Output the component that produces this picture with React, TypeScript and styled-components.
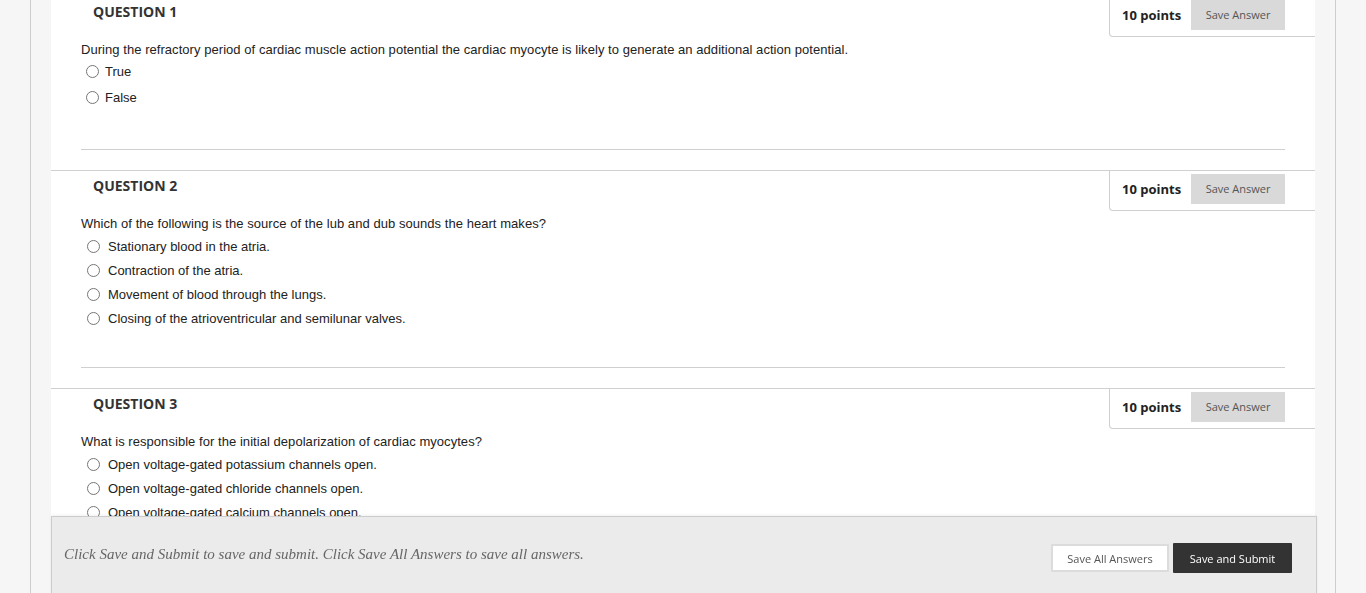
import styled, { createGlobalStyle } from "styled-components";

const GlobalStyle = createGlobalStyle`
  html, body {
    margin: 0;
    padding: 0;
    background: #f6f6f6;
    overflow: hidden;
  }
  * { box-sizing: border-box; }
`;

// page frame with the two grey rails
const Page = styled.div`
  margin: 0 30px;
  height: 593px;
  border-left: 1px solid #cdcdcd;
  border-right: 1px solid #cdcdcd;
  padding: 0 20px;
  overflow: hidden;
`;

const Content = styled.div`
  background: #fff;
  margin-top: -4px;
  min-height: 700px;
`;

const QuestionBlock = styled.div`
  border-top: 1px solid #d0d0d0;
`;

const Header = styled.div`
  display: flex;
  justify-content: space-between;
  align-items: flex-start;
`;

const Title = styled.h3`
  margin: 0;
  padding: 5px 0 0 42px;
  font-family: "Open Sans", sans-serif;
  font-size: 14px;
  line-height: 20px;
  font-weight: 700;
  color: #333;
`;

const PointsBox = styled.div`
  display: flex;
  align-items: center;
  width: 206px;
  height: 40px;
  padding: 3px 30px 7px 12px;
  border-left: 1px solid #cfcfcf;
  border-bottom: 1px solid #cfcfcf;
  border-bottom-left-radius: 4px;
`;

const Points = styled.span`
  font-family: "Open Sans", sans-serif;
  font-weight: 700;
  font-size: 13px;
  color: #222;
  white-space: nowrap;
  margin-right: 10px;
`;

const SaveAnswer = styled.button`
  height: 30px;
  width: 95px;
  padding: 0;
  border: none;
  background: #d9d9d9;
  color: #555;
  font-family: "Open Sans", sans-serif;
  font-size: 11px;
  cursor: pointer;
`;

const Prompt = styled.p`
  margin: 5px 0 0;
  padding-left: 30px;
  font-family: "Liberation Sans", Arial, sans-serif;
  font-size: 13px;
  line-height: 16px;
  letter-spacing: 0.05px;
  color: #222;
`;

const Options = styled.div<{ $tf?: boolean }>`
  margin-top: ${(p) => (p.$tf ? "0px" : "2px")};
  padding-left: ${(p) => (p.$tf ? "35px" : "36px")};
`;

const OptionRow = styled.label<{ $tf?: boolean }>`
  display: flex;
  align-items: center;
  height: ${(p) => (p.$tf ? "26px" : "24px")};
  gap: ${(p) => (p.$tf ? "6px" : "8px")};
  font-family: "Liberation Sans", Arial, sans-serif;
  font-size: 13px;
  color: #222;

  input {
    margin: 0;
    width: 13px;
    height: 13px;
  }
`;

const Divider = styled.hr<{ $tf?: boolean }>`
  margin: ${(p) => (p.$tf ? "39px" : "37px")} 30px 20px;
  border: none;
  border-top: 1px solid #cfcfcf;
`;

const Footer = styled.div`
  position: fixed;
  left: 51px;
  bottom: 0;
  width: 1266px;
  height: 77px;
  background: #ebebeb;
  border: 1px solid #cccccc;
  border-bottom: none;
  box-shadow: 0 -1px 3px rgba(0, 0, 0, 0.06);
  display: flex;
  align-items: center;
  justify-content: space-between;
  padding: 0 24px 0 12px;
`;

const FooterNote = styled.p`
  margin: 0 0 2px;
  font-family: "Liberation Serif", Georgia, serif;
  font-style: italic;
  font-size: 15px;
  color: #666;
`;

const FooterButtons = styled.div`
  display: flex;
  align-items: center;
  gap: 4px;
  margin-top: 6px;
`;

const FooterButton = styled.button<{ $primary?: boolean }>`
  font-family: "Open Sans", sans-serif;
  font-size: 11px;
  cursor: pointer;
  border-radius: 1px;
  ${(p) =>
    p.$primary
      ? `
    height: 30px;
    width: 119px;
    background: #333;
    color: #fff;
    border: none;
  `
      : `
    height: 28px;
    width: 118px;
    background: #fff;
    color: #555;
    border: 2px solid #dcdcdc;
  `}
`;

type Question = {
  n: number;
  text: string;
  options: string[];
  tf?: boolean;
};

const questions: Question[] = [
  {
    n: 1,
    text:
      "During the refractory period of cardiac muscle action potential the cardiac myocyte is likely to generate an additional action potential.",
    options: ["True", "False"],
    tf: true,
  },
  {
    n: 2,
    text: "Which of the following is the source of the lub and dub sounds the heart makes?",
    options: [
      "Stationary blood in the atria.",
      "Contraction of the atria.",
      "Movement of blood through the lungs.",
      "Closing of the atrioventricular and semilunar valves.",
    ],
  },
  {
    n: 3,
    text: "What is responsible for the initial depolarization of cardiac myocytes?",
    options: [
      "Open voltage-gated potassium channels open.",
      "Open voltage-gated chloride channels open.",
      "Open voltage-gated calcium channels open.",
      "Open voltage-gated sodium channels open.",
    ],
  },
];

export default function App() {
  return (
    <>
      <GlobalStyle />
      <Page>
        <Content>
          {questions.map((q) => (
            <QuestionBlock key={q.n}>
              <Header>
                <Title>QUESTION {q.n}</Title>
                <PointsBox>
                  <Points>10 points</Points>
                  <SaveAnswer>Save Answer</SaveAnswer>
                </PointsBox>
              </Header>
              <Prompt>{q.text}</Prompt>
              <Options $tf={q.tf}>
                {q.options.map((o) => (
                  <OptionRow key={o} $tf={q.tf}>
                    <input type="radio" name={`q${q.n}`} />
                    {o}
                  </OptionRow>
                ))}
              </Options>
              <Divider $tf={q.tf} />
            </QuestionBlock>
          ))}
        </Content>
      </Page>
      <Footer>
        <FooterNote>
          Click Save and Submit to save and submit. Click Save All Answers to save all answers.
        </FooterNote>
        <FooterButtons>
          <FooterButton>Save All Answers</FooterButton>
          <FooterButton $primary>Save and Submit</FooterButton>
        </FooterButtons>
      </Footer>
    </>
  );
}
